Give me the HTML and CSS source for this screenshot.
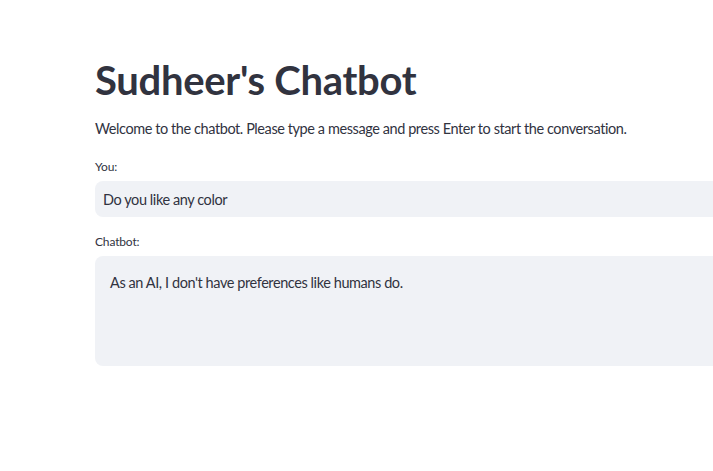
FILE: index.html
```html
<!DOCTYPE html>
<html lang="en">
<head>
<meta charset="utf-8">
<title>Sudheer's Chatbot</title>
<link rel="stylesheet" href="styles.css">
</head>
<body>
<main class="main">
  <h1 class="title">Sudheer's Chatbot</h1>
  <p class="intro">Welcome to the chatbot. Please type a message and press Enter to start the conversation.</p>
  <div class="field">
    <label class="label" for="you">You:</label>
    <input class="input" id="you" type="text" value="Do you like any color">
  </div>
  <div class="field">
    <label class="label" for="bot">Chatbot:</label>
    <textarea class="textarea" id="bot">As an AI, I don't have preferences like humans do.</textarea>
  </div>
</main>
</body>
</html>
```
FILE: styles.css
```css
html, body {
  margin: 0;
  padding: 0;
  background: #ffffff;
  overflow: hidden;
  height: 100%;
}
body {
  font-family: "Lato", "Noto Sans", sans-serif;
  color: #31333f;
}
.main {
  box-sizing: border-box;
  width: 100%;
  padding: 56px 0 0 95px;
  display: flex;
  flex-direction: column;
}
.title {
  margin: 0;
  font-size: 40px;
  font-weight: 700;
  line-height: 48px;
  letter-spacing: -0.3px;
}
.intro {
  margin: 13px 0 0;
  font-size: 14.5px;
  letter-spacing: -0.42px;
  line-height: 24px;
}
.field {
  display: flex;
  flex-direction: column;
  margin-top: 16px;
}
.field + .field {
  margin-top: 15px;
}
.label {
  font-size: 12px;
  letter-spacing: -0.15px;
  line-height: 20px;
  margin-bottom: 4px;
}
.input, .textarea {
  font-family: inherit;
  color: #31333f;
  background: #f0f2f6;
  border: none;
  border-radius: 8px 0 0 8px;
  outline: none;
  box-sizing: border-box;
  width: 100%;
  font-size: 14.5px;
  letter-spacing: -0.42px;
}
.input {
  height: 36px;
  padding: 0 8px;
}
.textarea {
  display: block;
  height: 110px;
  padding: 16px 15px;
  resize: none;
  line-height: 22px;
}
```
